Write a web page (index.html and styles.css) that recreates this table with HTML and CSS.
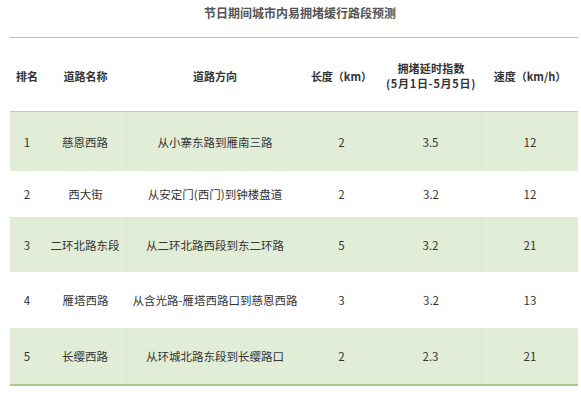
FILE: index.html
```html
<!DOCTYPE html>
<html lang="zh-CN">
<head>
<meta charset="utf-8">
<link rel="stylesheet" href="styles.css">
</head>
<body>
<div class="page">
  <h1 class="title">节日期间城市内易拥堵缓行路段预测</h1>
  <div class="table">
    <div class="head">
      <div class="hc">排名</div>
      <div class="hc">道路名称</div>
      <div class="hc">道路方向</div>
      <div class="hc">长度（km）</div>
      <div class="hc two"><span class="l1">拥堵延时指数</span><span class="l2">(5月1日-5月5日)</span></div>
      <div class="hc">速度（km/h）</div>
    </div>
    <div class="row green r1">
      <div class="c">1</div><div class="c">慈恩西路</div><div class="c">从小寨东路到雁南三路</div><div class="c">2</div><div class="c">3.5</div><div class="c">12</div>
    </div>
    <div class="row r2">
      <div class="c">2</div><div class="c">西大街</div><div class="c">从安定门(西门)到钟楼盘道</div><div class="c">2</div><div class="c">3.2</div><div class="c">12</div>
    </div>
    <div class="row green r3">
      <div class="c">3</div><div class="c">二环北路东段</div><div class="c">从二环北路西段到东二环路</div><div class="c">5</div><div class="c">3.2</div><div class="c">21</div>
    </div>
    <div class="row r4">
      <div class="c">4</div><div class="c">雁塔西路</div><div class="c">从含光路-雁塔西路口到慈恩西路</div><div class="c">3</div><div class="c">3.2</div><div class="c">13</div>
    </div>
    <div class="row green r5">
      <div class="c">5</div><div class="c">长缨西路</div><div class="c">从环城北路东段到长缨路口</div><div class="c">2</div><div class="c">2.3</div><div class="c">21</div>
    </div>
  </div>
</div>
</body>
</html>
```
FILE: styles.css
```css
html, body {
  margin: 0;
  padding: 0;
  background: #ffffff;
}
body {
  font-family: "Noto Sans CJK SC", "Noto Sans", sans-serif;
  color: #333333;
  width: 581px;
  height: 396px;
  overflow: hidden;
}
.title {
  margin: 0;
  width: 581px;
  height: 37px;
  padding: 4px 0 0 19px;
  box-sizing: border-box;
  text-align: center;
  font-size: 12px;
  line-height: 17px;
  font-weight: 700;
  color: #555555;
}
.table {
  margin-left: 10px;
  width: 568px;
  border-top: 1px solid #aacb98;
  border-bottom: 2px solid #a7c990;
}
.head,
.row {
  display: grid;
  grid-template-columns: 34px 83px 176px 77px 102px 96px;
}
.head {
  height: 74px;
  align-items: center;
  border-bottom: 1px solid #b6d3a2;
  box-sizing: border-box;
}
.hc {
  text-align: center;
  font-size: 11px;
  font-weight: 700;
  line-height: 15px;
  color: #333333;
  white-space: nowrap;
  padding-top: 4px;
}
.hc.two {
  display: flex;
  flex-direction: column;
  align-items: center;
  padding-top: 2px;
}
.hc .l1 {
  letter-spacing: 0.2px;
}
.hc .l2 {
  letter-spacing: 0.7px;
}
.row {
  align-items: stretch;
}
.row.green {
  background: #e2edd8;
}
.c {
  display: flex;
  align-items: center;
  justify-content: center;
  font-size: 11.5px;
  color: #333333;
  white-space: nowrap;
}
.row.green .c:nth-child(2),
.row.green .c:nth-child(5) {
  border-right: 1px solid #d6e4cb;
}
.r1 { height: 59px; }
.r2 { height: 46px; }
.r3 { height: 55px; }
.r4 { height: 56px; }
.r5 { height: 56px; }
```
